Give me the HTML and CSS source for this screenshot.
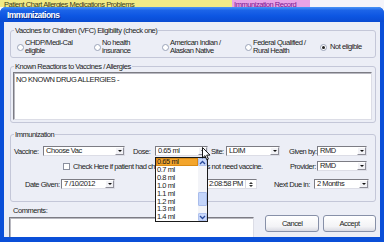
FILE: index.html
```html
<!DOCTYPE html>
<html lang="en">
<head>
    <meta charset="UTF-8">
    <title>Immunizations</title>
    <link rel="stylesheet" href="styles.css">
</head>
<body>
<div class="screen">
    <div class="backdrop">
        <span class="note">Patient Chart  Allergies  Medications  Problems</span>
        <span class="link">Immunization Record</span>
        <span class="rest"></span>
    </div>

    <div class="window">
        <div class="titlebar">Immunizations</div>
        <div class="client">
            <fieldset class="group vfc">
                <legend>Vaccines for Children (VFC) Eligibility (check one)</legend>
                <div class="radios">
                    <label class="opt opt-1"><span class="radio"></span><span>CHDP/Medi-Cal<br>eligible</span></label>
                    <label class="opt opt-2"><span class="radio"></span><span>No health<br>insurance</span></label>
                    <label class="opt opt-3"><span class="radio"></span><span>American Indian /<br>Alaskan Native</span></label>
                    <label class="opt opt-4"><span class="radio"></span><span>Federal Qualified /<br>Rural Health</span></label>
                    <label class="opt opt-5"><span class="radio checked"></span><span>Not eligible</span></label>
                </div>
            </fieldset>

            <fieldset class="group allergies">
                <legend>Known Reactions to Vaccines / Allergies</legend>
                <div class="memo">NO KNOWN DRUG ALLERGIES -</div>
            </fieldset>

            <fieldset class="group imm">
                <legend>Immunization</legend>
                <div class="row row-1">
                    <span class="lbl w-vaccine">Vaccine:</span>
                    <div class="combo w-82"><span class="val">Choose Vac</span><span class="drop"></span></div>
                    <span class="lbl w-dose">Dose:</span>
                    <div class="combo w-53"><span class="val">0.65 ml</span><span class="drop"></span></div>
                    <span class="lbl w-site">Site:</span>
                    <div class="combo w-54"><span class="val">LDIM</span><span class="drop"></span></div>
                    <span class="lbl w-given">Given by:</span>
                    <div class="combo w-50"><span class="val">RMD</span><span class="drop"></span></div>
                </div>
                <div class="row row-2">
                    <span class="check"></span>
                    <span class="check-text">Check Here if patient had chickenpox and does not need vaccine.</span>
                    <span class="lbl w-provider">Provider:</span>
                    <div class="combo w-50"><span class="val">RMD</span><span class="drop"></span></div>
                </div>
                <div class="row row-3">
                    <span class="lbl w-date">Date Given:</span>
                    <div class="combo w-54"><span class="val">7 /10/2012</span><span class="drop"></span></div>
                    <div class="timebox"><span class="val">2:08:58 PM</span><span class="spin"><i class="up"></i><i class="down"></i></span></div>
                    <span class="lbl w-next">Next Due in:</span>
                    <div class="combo w-55"><span class="val">2 Months</span><span class="drop"></span></div>
                </div>
            </fieldset>

            <div class="footer">
                <div class="comments">
                    <div class="comments-label">Comments:</div>
                    <div class="memo comments-box"></div>
                </div>
                <button class="btn cancel">Cancel</button>
                <button class="btn accept">Accept</button>
            </div>
        </div>
    </div>

    <!-- open dose list -->
    <div class="dose-list">
        <ul class="items">
            <li class="selected">0.65 ml</li>
            <li>0.7 ml</li>
            <li>0.8 ml</li>
            <li>1.0 ml</li>
            <li>1.1 ml</li>
            <li>1.2 ml</li>
            <li>1.3 ml</li>
            <li>1.4 ml</li>
        </ul>
        <div class="scrollbar">
            <span class="sb-btn"><svg width="7" height="5" viewBox="0 0 7 5"><path d="M1 4 L3.5 1.5 L6 4" fill="none" stroke="#2a4a9a" stroke-width="1.3"/></svg></span>
            <span class="sb-track"><span class="sb-thumb"></span></span>
            <span class="sb-btn"><svg width="7" height="5" viewBox="0 0 7 5"><path d="M1 1 L3.5 3.5 L6 1" fill="none" stroke="#2a4a9a" stroke-width="1.3"/></svg></span>
        </div>
    </div>

    <svg class="cursor" width="9" height="14" viewBox="0 0 9 14">
        <path d="M0.5 0.5 L0.5 11 L3 8.6 L4.8 12.8 L6.4 12.1 L4.7 8.1 L8 8.1 Z" fill="#fff" stroke="#000" stroke-width="0.9"/>
    </svg>
</div>
</body>
</html>
```

FILE: styles.css
```css
* {
    box-sizing: border-box;
}

body {
    margin: 0;
    width: 384px;
    height: 242px;
    overflow: hidden;
    background: #f4f4fa;
    font-family: "Liberation Sans", Arial, sans-serif;
    font-size: 7.5px;
    letter-spacing: -0.45px;
    color: #1b1b1b;
}

.screen {
    position: relative;
    width: 384px;
    height: 242px;
    overflow: hidden;
}

/* page behind the dialog */
.backdrop {
    display: flex;
    height: 7px;
    overflow: hidden;
    white-space: nowrap;
    line-height: 9px;
}

.backdrop span {
    display: block;
    margin-top: -4px;
    padding-top: 4px;
    overflow: hidden;
}

.backdrop .note {
    width: 232px;
    background: #f1ea86;
    color: #3a3a20;
    padding-left: 4px;
}

.backdrop .link {
    width: 78px;
    background: #e9a3e6;
    color: #7b1590;
    text-decoration: underline;
    padding-left: 2px;
}

.backdrop .rest {
    flex: 1;
    background: #f4f4fa;
}

/* dialog window */
.window {
    display: flex;
    flex-direction: column;
    height: 235px;
    background: #0a4fd8;
    border-radius: 6px 6px 0 0;
}

.titlebar {
    height: 15px;
    padding-left: 7px;
    display: flex;
    align-items: center;
    color: #fff;
    font-weight: bold;
    font-size: 8.5px;
    letter-spacing: -0.55px;
    text-shadow: 1px 1px 0 #0b2a86;
    border-radius: 6px 6px 0 0;
    background: linear-gradient(180deg, #4a94f6 0%, #1c64e8 22%, #0d56e2 60%, #0a4bd2 100%);
}

.client {
    flex: 1;
    margin: 0 4px 5px 4px;
    padding: 4px 4px 0 6px;
    background: #eceef6;
    overflow: hidden;
}

.group {
    margin: 0;
    min-width: 0;
    border: 1px solid #c4c7d8;
    border-radius: 3px;
    padding: 0 2px 2px 3px;
}

.group legend {
    padding: 0 1px;
    line-height: 9px;
    color: #1b1b1b;
}

/* VFC radios */
.vfc {
    padding-top: 4px;
}

.radios {
    display: flex;
    line-height: 8px;
}

.opt {
    display: flex;
    flex: none;
    align-items: center;
    gap: 1px;
}

.opt-1 { margin-left: 3px; width: 77px; }
.opt-2 { width: 68px; }
.opt-3 { width: 83px; }
.opt-4 { width: 75px; }
.opt-5 { gap: 3px; }

.radio {
    width: 7px;
    height: 7px;
    flex: none;
    border-radius: 50%;
    border: 1px solid #9aa3b8;
    background: #fff;
    display: flex;
    align-items: center;
    justify-content: center;
}

.radio.checked::after {
    content: "";
    width: 3px;
    height: 3px;
    border-radius: 50%;
    background: #222;
}

/* allergies */
.allergies {
    margin-top: 4px;
    padding-top: 1px;
}

.memo {
    background: #fff;
    border: 1px solid;
    border-color: #7c7c84 #dcdde6 #dcdde6 #7c7c84;
    box-shadow: inset 1px 1px 0 #b8b8c0;
}

.allergies .memo {
    height: 48px;
    margin-left: -1px;
    margin-right: 1px;
    padding: 2px 2px;
    line-height: 9px;
}

/* immunization */
.imm {
    margin-top: 7px;
    padding-top: 7px;
    padding-bottom: 12px;
}

.row {
    display: flex;
    align-items: center;
    height: 10px;
    white-space: nowrap;
}

.row > * {
    flex: none;
}

.row-2 { margin-top: 5px; }
.row-3 { margin-top: 8px; }

.w-vaccine { width: 29px; }
.w-dose { width: 22px; margin-left: 8px; }
.w-site { width: 15px; margin-left: 3px; }
.w-given { width: 28px; margin-left: 9px; }
.w-provider { width: 27px; }
.w-date { width: 36px; margin-left: 11px; }
.w-next { width: 40px; margin-left: 17px; }

.combo {
    display: flex;
    height: 10px;
    background: #fff;
    border: 1px solid;
    border-color: #7c7c84 #dcdde6 #dcdde6 #7c7c84;
}

.w-82 { width: 82px; }
.w-53 { width: 53px; }
.w-54 { width: 54px; }
.w-50 { width: 50px; }
.w-55 { width: 55px; }

.val {
    flex: 1;
    padding-left: 2px;
    line-height: 8px;
    overflow: hidden;
}

.drop {
    width: 9px;
    flex: none;
    display: flex;
    align-items: center;
    justify-content: center;
    background: #f2f2f6;
    border: 1px solid;
    border-color: #fff #8e8e98 #8e8e98 #fff;
}

.drop::after {
    content: "";
    border-left: 2px solid transparent;
    border-right: 2px solid transparent;
    border-top: 2px solid #111;
}

.check {
    width: 7px;
    height: 7px;
    margin-left: 49px;
    background: #fff;
    border: 1px solid #8a8f9e;
}

.check-text {
    width: 217px;
    margin-left: 3px;
    overflow: hidden;
}

.timebox {
    display: flex;
    width: 57px;
    height: 10px;
    margin-left: 85px;
    background: #fff;
    border: 1px solid;
    border-color: #7c7c84 #dcdde6 #dcdde6 #7c7c84;
}

.timebox .val {
    padding-left: 8px;
}

.spin {
    width: 10px;
    margin-right: 1px;
    display: flex;
    flex-direction: column;
    justify-content: center;
    align-items: center;
    gap: 1px;
    border-left: 1px solid #d8d8e0;
}

.spin i {
    display: block;
    border-left: 2px solid transparent;
    border-right: 2px solid transparent;
}

.spin .up { border-bottom: 2px solid #333; }
.spin .down { border-top: 2px solid #333; }

/* footer */
.footer {
    display: flex;
    align-items: flex-start;
    margin-top: 5px;
    margin-left: -1px;
}

.comments {
    width: 246px;
}

.comments-label {
    padding-left: 4px;
    line-height: 8px;
}

.comments-box {
    height: 30px;
    margin-top: 2px;
}

.btn {
    margin: 8px 0 0 11px;
    width: 54px;
    height: 17px;
    padding: 0;
    font: inherit;
    letter-spacing: inherit;
    color: #1b1b1b;
    border: 1px solid #8790a8;
    border-radius: 3px;
    background: linear-gradient(180deg, #ffffff 0%, #f3f3f6 70%, #d9dae2 100%);
}

.btn.accept {
    width: 53px;
    margin-left: 4px;
}

/* dropdown list of the dose combo */
.dose-list {
    position: absolute;
    left: 155px;
    top: 157px;
    width: 53px;
    height: 65px;
    display: flex;
    background: #fff;
    border: 1px solid #1a1a1a;
}

.items {
    flex: 1;
    margin: 0;
    padding: 0;
    list-style: none;
    line-height: 7.9px;
}

.items li {
    padding-left: 1px;
}

.items li.selected {
    background: #f3a52c;
    box-shadow: inset 0 0 0 1px #d98a14;
}

.scrollbar {
    width: 9px;
    display: flex;
    flex-direction: column;
    background: #f3f4f8;
}

.sb-btn {
    height: 8px;
    display: flex;
    align-items: center;
    justify-content: center;
    background: #c9d8fb;
    border: 1px solid #b0c2ee;
    border-radius: 1px;
}

.sb-track {
    flex: 1;
    padding-top: 26px;
}

.sb-thumb {
    display: block;
    height: 14px;
    background: #c4d5fa;
    border: 1px solid #a9bdec;
    border-radius: 1px;
}

.cursor {
    position: absolute;
    left: 202px;
    top: 147px;
}
```
